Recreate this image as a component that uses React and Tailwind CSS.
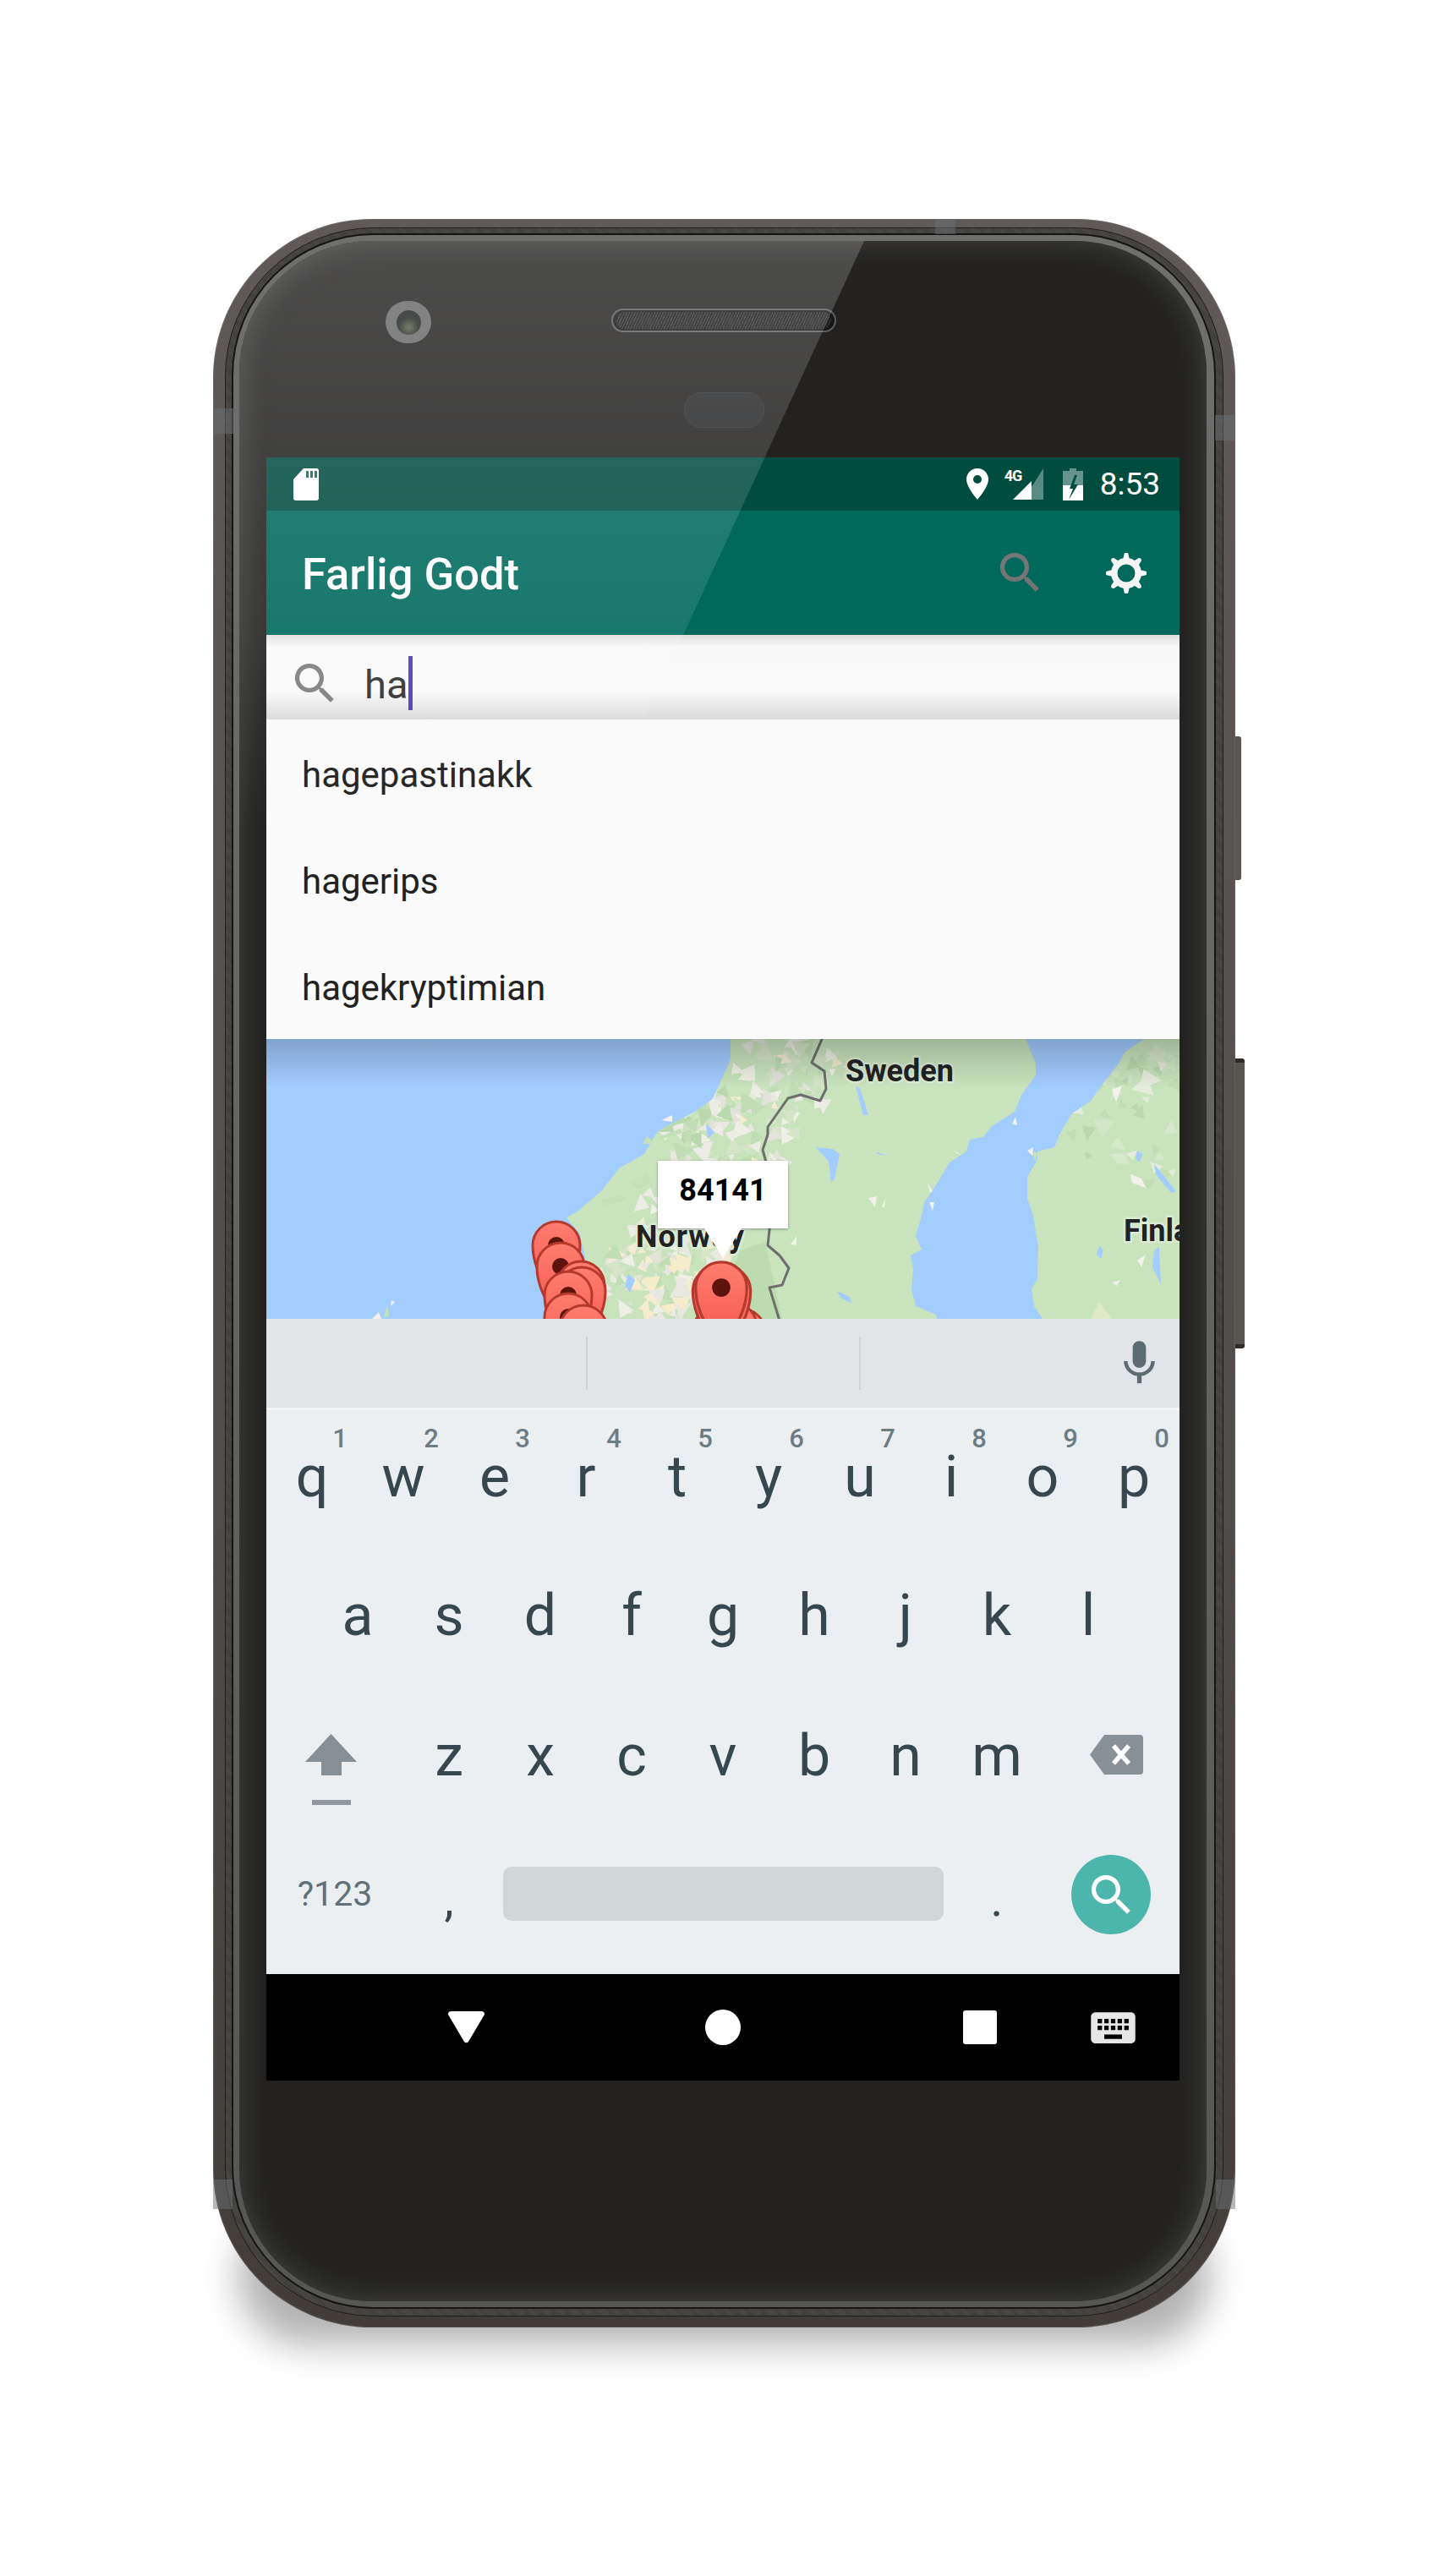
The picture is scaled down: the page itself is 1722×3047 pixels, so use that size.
const SEARCH_PATH = "M15.5 14h-.79l-.28-.27A6.471 6.471 0 0 0 16 9.5 6.5 6.5 0 1 0 9.5 16c1.61 0 3.09-.59 4.23-1.57l.27.28v.79l5 4.99L20.49 19l-4.99-5zm-6 0C7.01 14 5 11.99 5 9.5S7.01 5 9.5 5 14 7.01 14 9.5 11.99 14 9.5 14z";
const MIC_PATH = "M12 14c1.66 0 2.99-1.34 2.99-3L15 5c0-1.66-1.34-3-3-3S9 3.34 9 5v6c0 1.66 1.34 3 3 3zm5.3-3c0 3-2.54 5.1-5.3 5.1S6.7 14 6.7 11H5c0 3.41 2.72 6.23 6 6.72V21h2v-3.28c3.28-.48 6-3.3 6-6.72h-1.7z";
const KEYBOARD_PATH = "M20 5H4c-1.1 0-1.99.9-1.99 2L2 17c0 1.1.9 2 2 2h16c1.1 0 2-.9 2-2V7c0-1.1-.9-2-2-2zm-9 3h2v2h-2V8zm0 3h2v2h-2v-2zM8 8h2v2H8V8zm0 3h2v2H8v-2zm-1 2H5v-2h2v2zm0-3H5V8h2v2zm9 7H8v-2h8v2zm0-4h-2v-2h2v2zm0-3h-2V8h2v2zm3 3h-2v-2h2v2zm0-3h-2V8h2v2z";

const LAND = "549,0 549,24 528,71 507,86 463,109 447,136 417,153 397,179 368,204 355,211 370,229 378,262 392,300 400,331 793,331 792,326 768,316 763,296 765,273 762,256 775,249 768,233 775,209 778,193 788,179 798,163 808,146 828,133 832,119 848,116 858,103 885,86 893,66 910,43 910,29 898,0";
const FINLAND = "1038,0 1015,16 1008,29 985,59 975,73 952,89 938,113 932,128 912,133 912,143 900,163 900,189 907,209 913,246 912,283 905,296 908,316 918,331 1080,331 1080,0";
const BORDER = "658,-2 645,28 660,38 662,59 655,73 632,66 617,70 593,104 593,113 587,131 593,153 595,226 593,244 607,256 618,271 610,291 595,294 607,333";

const LAKES = [
  "650,128 670,130 678,136 672,165 668,170 665,145",
  "675,298 690,305 692,312 680,307",
  "697,56 702,58 712,90 706,90",
  "722,134 735,138 722,136",
  "1030,132 1036,136 1033,145 1028,142",
  "1050,148 1076,180 1070,182 1052,160",
  "1050,250 1056,246 1058,290 1048,270",
  "985,245 990,250 987,260 982,255",
  "750,28 756,40 745,32",
  "520,100 530,110 522,118",
  "428,278 436,285 430,300 424,292",
];

const WHITES = [
  "467,96 480,90 480,98",
  "712,188 722,186 720,199",
  "728,199 732,188 731,199",
  "620,243 627,233 627,244",
  "125,331 133,323 136,331",
  "147,316 148,309 152,311",
  "784,193 790,193 788,203",
  "812,131 822,137 816,135",
  "1000,60 1012,55 1005,75",
  "1030,262 1040,255 1035,270",
  "1000,288 1010,285 1006,292",
  "1022,160 1035,165 1040,176 1024,170",
  "782,170 788,180 785,182",
  "882,100 886,92 888,102",
  "900,132 907,128 906,138",
];

const ISLANDS = [
  "463,116 490,106 492,111 467,118",
  "445,124 450,115 458,121 455,124",
  "139,329 143,314 145,328",
  "430,170 450,158 455,170 440,178",
  "396,190 420,184 425,190 400,198",
  "912,135 904,132 910,145",
];

// seeded so the picture stays the same on every load
const makeRandom = (seed) => () => {
  seed = (seed * 16807) % 2147483647;
  return seed / 2147483647;
};

const scatterPatches = (seed, count, from, to, spread, colors, minSize, maxSize) => {
  const random = makeRandom(seed);
  const length = Math.hypot(to[0] - from[0], to[1] - from[1]);
  const normal = [-(to[1] - from[1]) / length, (to[0] - from[0]) / length];
  const patches = [];
  for (let i = 0; i < count; i++) {
    const along = random();
    const across = (random() - 0.5) * 2 * spread;
    const x = from[0] + (to[0] - from[0]) * along + normal[0] * across;
    const y = from[1] + (to[1] - from[1]) * along + normal[1] * across;
    const size = minSize + random() * (maxSize - minSize);
    const turn = random() * Math.PI * 2;
    const points = [0, 2.1, 4.2].map((step) => {
      const r = size * (0.6 + random() * 0.6);
      return `${(x + Math.cos(turn + step) * r).toFixed(1)},${(y + Math.sin(turn + step) * r).toFixed(1)}`;
    });
    patches.push({ points: points.join(" "), color: colors[Math.floor(random() * colors.length)] });
  }
  return patches;
};

const NORWAY_PATCHES = [
  ...scatterPatches(11, 260, [430, 325], [640, 0], 60, ["#ecebe5", "#e3e2db", "#eef0e6", "#f3ecd2", "#c0ddb3", "#d6e4c8", "#e8e7e0"], 5, 14),
  ...scatterPatches(29, 30, [445, 320], [535, 240], 30, ["#f5ecc9", "#f3ecd2", "#e8e7e0"], 8, 18),
  ...scatterPatches(37, 22, [480, 120], [560, 60], 24, ["#c0ddb3", "#b9d8ad", "#ecebe5"], 8, 16),
];
const FINLAND_PATCHES = [
  ...scatterPatches(53, 40, [950, 110], [1080, 10], 38, ["#c0ddb3", "#d4e6c8", "#e6ecdc", "#b9d8ad"], 6, 15),
  ...scatterPatches(71, 12, [1010, 150], [1080, 130], 30, ["#d7e8cc", "#e6ecdc", "#c0ddb3"], 5, 13),
];

const Icon = ({ path, className }) => (
  <svg viewBox="0 0 24 24" className={className} fill="currentColor">
    <path d={path} />
  </svg>
);

const SdCardIcon = () => (
  <svg viewBox="0 0 30 38" className="h-[38px] w-[30px]">
    <path d="M12 0h15a3 3 0 0 1 3 3v32a3 3 0 0 1-3 3H3a3 3 0 0 1-3-3V13z" fill="#fff" />
    <path d="M15 3h3v8h-3zM20 3h3v8h-3zM25 3h3v8h-3z" fill="#27625a" />
  </svg>
);

const SignalIcon = () => (
  <div className="relative h-[37px] w-[46px]">
    <span className="absolute left-0 top-[-2px] text-[18px] font-bold leading-[22px] tracking-[-1px] text-white">4G</span>
    <svg viewBox="0 0 46 37" className="h-[37px] w-[46px]">
      <path d="M32 37V22L46 0v37z" fill="#fff" opacity="0.35" />
      <path d="M10 37l22-22v22z" fill="#fff" />
    </svg>
  </div>
);

const BatteryIcon = () => (
  <svg viewBox="0 0 24 38" className="h-[38px] w-[24px]">
    <path d="M8 0h8v3h8v17H0V3h8z" fill="#fff" opacity="0.4" />
    <path d="M0 20h24v18H0z" fill="#fff" />
    <path d="M14 8l-6 16h4l-5 13 11-18h-5l4-11z" fill="#004d40" />
  </svg>
);

const GearIcon = () => (
  <svg viewBox="0 0 48 48" className="h-[48px] w-[48px]">
    <circle cx="24" cy="24" r="14.2" fill="none" stroke="#f5f5f5" strokeWidth="7.4" />
    {[0, 45, 90, 135, 180, 225, 270, 315].map((angle) => (
      <path key={angle} d="M19.5 11L21.5 1.5a2.6 2.6 0 0 1 5 0L28.5 11z" fill="#f5f5f5" transform={`rotate(${angle} 24 24)`} />
    ))}
  </svg>
);

const Pin = ({ x, y, size = 1 }) => (
  <g transform={`translate(${x} ${y}) scale(${size})`}>
    <path d="M0 78C-5 52-28 34-28 0A28 28 0 1 1 28 0C28 34 5 52 0 78Z" fill="url(#pinFill)" stroke="#b5392c" strokeWidth="3" />
    <circle cx="0" cy="0" r="10" fill="#5e130d" />
  </g>
);

const MapView = () => (
  <div className="relative h-[331px] w-full bg-[#a3ccff]">
    <svg viewBox="0 0 1080 331" className="block h-[331px] w-[1080px]">
      <defs>
        <linearGradient id="pinFill" x1="0" y1="0" x2="0" y2="1">
          <stop offset="0" stopColor="#ff7d70" />
          <stop offset="1" stopColor="#f2504a" />
        </linearGradient>
        <clipPath id="landClip">
          <polygon points={LAND} />
          <polygon points={FINLAND} />
        </clipPath>
      </defs>
      <polygon points={LAND} fill="#c9e3bd" />
      <polygon points={FINLAND} fill="#c9e3bd" />
      <g clipPath="url(#landClip)">
        <polygon points="530,331 560,250 590,240 610,331" fill="#bcdcb0" />
        {NORWAY_PATCHES.map((patch, i) => (
          <polygon key={i} points={patch.points} fill={patch.color} />
        ))}
        {FINLAND_PATCHES.map((patch, i) => (
          <polygon key={i} points={patch.points} fill={patch.color} />
        ))}
        <polygon points="975,331 985,310 1000,331" fill="#dfe9c6" />
        {LAKES.map((points) => (
          <polygon key={points} points={points} fill="#a3ccff" />
        ))}
      </g>
      {ISLANDS.map((points) => (
        <polygon key={points} points={points} fill="#c3e0b6" />
      ))}
      {WHITES.map((points) => (
        <polygon key={points} points={points} fill="#f3f1ec" />
      ))}
      <polyline points={BORDER} fill="none" stroke="#6e6e6e" strokeWidth="3" strokeLinejoin="round" />
      <g fontFamily="Roboto, sans-serif" fontWeight="700" fontSize="36" fill="#222" stroke="#dcebd4" strokeWidth="5" paintOrder="stroke" strokeLinejoin="round">
        <text x="685" y="50">Sweden</text>
        <text x="437" y="246" letterSpacing="1">Norway</text>
        <text x="1014" y="239">Finland</text>
      </g>
      <Pin x={343} y={244} />
      <Pin x={348} y={269} />
      <Pin x={372} y={291} />
      <Pin x={373} y={298} />
      <Pin x={357} y={303} />
      <Pin x={357} y={329} />
      <Pin x={375} y={343} />
      <Pin x={562} y={347} />
      <Pin x={520} y={358} />
      <Pin x={552} y={340} />
      <Pin x={532} y={346} />
      <Pin x={543} y={298} size={1.06} />
      <Pin x={534} y={298} size={1.06} />
      <Pin x={538} y={294} size={1.08} />
    </svg>
    <div className="absolute left-0 right-0 top-0 h-[58px] bg-gradient-to-b from-black/20 to-transparent" />
    <div className="absolute left-[463px] top-[144px] flex h-[80px] w-[154px] justify-center bg-white pt-[14px] shadow-[0_1px_3px_rgba(0,0,0,0.35)]">
      <span className="text-[36px] font-bold leading-[42px] text-black">84141</span>
    </div>
    <div className="absolute left-[518px] top-[224px] h-[35px] w-[44px] bg-white [clip-path:polygon(0_0,100%_0,50%_100%)]" />
  </div>
);

const Key = ({ letter, digit }) => (
  <div className="relative flex w-[108px] justify-center">
    {digit ? (
      <span className="absolute left-[87px] top-[-27px] -translate-x-1/2 text-[31px] font-medium leading-[31px] text-[#6e7c84]">{digit}</span>
    ) : null}
    <span className="text-[68px] leading-[68px] text-[#37474f]">{letter}</span>
  </div>
);

const Keyboard = () => (
  <div className="border-t-[3px] border-[#f2f4f5] bg-[#eceff1]">
    <div className="flex h-[167px] pt-[45px]">
      {["q", "w", "e", "r", "t", "y", "u", "i", "o", "p"].map((letter, i) => (
        <Key key={letter} letter={letter} digit={String((i + 1) % 10)} />
      ))}
    </div>
    <div className="flex h-[167px] px-[54px] pt-[42px]">
      {["a", "s", "d", "f", "g", "h", "j", "k", "l"].map((letter) => (
        <Key key={letter} letter={letter} />
      ))}
    </div>
    <div className="flex h-[167px] pt-[41px]">
      <div className="flex w-[162px] flex-col items-center pr-[9px] pt-[8px]">
        <svg viewBox="0 0 61 49" className="h-[49px] w-[61px]">
          <path d="M30.5 0L61 33H43V49H19V33H0z" fill="#858f95" />
        </svg>
        <div className="mt-[29px] h-[6px] w-[46px] bg-[#8f999f]" />
      </div>
      {["z", "x", "c", "v", "b", "n", "m"].map((letter) => (
        <Key key={letter} letter={letter} />
      ))}
      <div className="flex w-[162px] justify-center pl-[12px] pt-[9px]">
        <svg viewBox="0 0 63 47" className="h-[47px] w-[63px]">
          <path d="M17 0H59a4 4 0 0 1 4 4V43a4 4 0 0 1-4 4H17L0 23.5z" fill="#879196" />
          <path d="M28 13l18 21M46 13L28 34" stroke="#fff" strokeWidth="5.5" fill="none" />
        </svg>
      </div>
    </div>
    <div className="flex h-[166px]">
      <div className="w-[162px] pt-[51px] text-center text-[41px] leading-[41px] text-[#60707a]">?123</div>
      <div className="w-[108px] pt-[50px] text-center text-[56px] leading-[56px] text-[#37474f]">,</div>
      <div className="flex w-[540px] justify-center pt-[39px]">
        <div className="h-[64px] w-[521px] rounded-[10px] bg-[#d0d5d8]" />
      </div>
      <div className="w-[108px] pt-[50px] text-center text-[56px] leading-[56px] text-[#37474f]">.</div>
      <div className="flex w-[162px] justify-center pt-[25px]">
        <div className="flex h-[94px] w-[94px] items-center justify-center rounded-full bg-[#4db6ac] text-white">
          <Icon path={SEARCH_PATH} className="h-[63px] w-[63px]" />
        </div>
      </div>
    </div>
  </div>
);

const NavBar = () => (
  <div className="flex h-[126px] items-center bg-black pl-[215px]">
    <svg viewBox="0 0 43 38" className="h-[38px] w-[43px]">
      <path d="M3 0H40a3 3 0 0 1 2.6 4.4L24 36a3 3 0 0 1-5 0L.4 4.4A3 3 0 0 1 3 0z" fill="#fff" />
    </svg>
    <div className="ml-[261px] h-[42px] w-[42px] rounded-full bg-white" />
    <div className="ml-[263px] h-[40px] w-[40px] rounded-[3px] bg-white" />
    <Icon path={KEYBOARD_PATH} className="ml-[106px] h-[63px] w-[63px] text-[#e6e6e6]" />
  </div>
);

const Screen = () => (
  <div className="relative flex h-[1920px] w-[1080px] flex-col overflow-hidden font-['Roboto',sans-serif]">
    <div className="flex h-[63px] items-center bg-[#004d40] pl-[32px] pr-[23px] text-white">
      <SdCardIcon />
      <div className="ml-auto flex items-center">
        <svg viewBox="0 0 26 37" className="h-[37px] w-[26px]">
          <path d="M13 0C5.8 0 0 5.8 0 13c0 9.5 13 24 13 24s13-14.500 13-24C26 5.800 20.200 0 13 0zm0 18a5 5 0 1 1 0-10 5 5 0 0 1 0 10z" fill="#fff" />
        </svg>
        <div className="ml-[19px]">
          <SignalIcon />
        </div>
        <div className="ml-[23px]">
          <BatteryIcon />
        </div>
        <span className="ml-[20px] text-[37px] leading-[42px]">8:53</span>
      </div>
    </div>

    <div className="flex h-[147px] items-center bg-[#00695c] pl-[42px] pr-[39px]">
      <h1 className="pt-[3px] text-[52.5px] font-medium leading-[60px] text-white">Farlig Godt</h1>
      <Icon path={SEARCH_PATH} className="ml-auto h-[63px] w-[63px] text-[#757575]" />
      <div className="ml-[70px]">
        <GearIcon />
      </div>
    </div>

    <div className="flex h-[100px] items-center bg-[linear-gradient(#dedede_0px,#f8f8f8_14px,#fafafa_65%,#dadada_100%)] pl-[26px] pt-[14px]">
      <Icon path={SEARCH_PATH} className="h-[63px] w-[63px] text-[#7f7f7f]" />
      <span className="ml-[27px] pt-[3px] text-[47px] leading-[56px] text-[#333]">ha</span>
      <span className="ml-[1px] h-[64px] w-[5px] bg-[#5040b0]" />
    </div>

    <ul className="h-[378px] bg-[#fafafa]">
      {["hagepastinakk", "hagerips", "hagekryptimian"].map((item) => (
        <li key={item} className="flex h-[126px] items-center pl-[42px] pt-[5px] text-[42px] leading-[50px] text-[#222]">
          {item}
        </li>
      ))}
    </ul>

    <MapView />

    <div className="relative flex h-[105px] items-center bg-[#e1e5e8]">
      <div className="ml-[378px] h-[63px] w-[2px] bg-[#cfd3d6]" />
      <div className="ml-[321px] h-[63px] w-[2px] bg-[#cfd3d6]" />
      <Icon path={MIC_PATH} className="ml-[298px] h-[63px] w-[63px] text-[#5f6b73]" />
    </div>

    <Keyboard />
    <NavBar />
  </div>
);

const Glare = () => (
  <svg className="pointer-events-none absolute left-0 top-0 h-[1000px] w-[800px]" viewBox="0 0 800 1000">
    <defs>
      <linearGradient id="glareFill" x1="0" y1="0" x2="0" y2="1">
        <stop offset="0" stopColor="#fff" stopOpacity="0.19" />
        <stop offset="0.26" stopColor="#fff" stopOpacity="0.14" />
        <stop offset="0.46" stopColor="#fff" stopOpacity="0.1" />
        <stop offset="0.57" stopColor="#fff" stopOpacity="0.05" />
        <stop offset="0.7" stopColor="#fff" stopOpacity="0" />
      </linearGradient>
    </defs>
    <polygon points="0,0 739,0 280,1000 0,1000" fill="url(#glareFill)" />
  </svg>
);

const Phone = () => (
  <div className="relative w-[1209px]">
    <div className="absolute bottom-[-20px] left-[30px] right-[30px] h-[160px] rounded-[140px] bg-black/30 blur-[22px]" />
    {/* side buttons */}
    <div className="absolute left-[1205px] top-[612px] h-[170px] w-[11px] rounded-r-[3px] bg-[#5b5653]" />
    <div className="absolute left-[1205px] top-[993px] h-[343px] w-[15px] rounded-r-[3px] border-y-[5px] border-[#2e2c2a] bg-[#57544f]" />

    <div className="relative rounded-[188px] bg-[linear-gradient(#5f5a57,#504c49_60%,#423d39)] pb-[13px] pl-[14px] pr-[14px] pt-[10px] shadow-[inset_0_0_2px_#8a8582]">
      <div className="rounded-[176px] border border-[#211f1e] bg-[repeating-linear-gradient(45deg,#4c4a46_0,#4c4a46_1px,#3f3d3a_1px,#3f3d3a_2px)] pb-[8px] pl-[7px] pr-[8px] pt-[6px]">
        <div className="rounded-[168px] bg-[#151413] p-[2px]">
          <div className="rounded-[166px] bg-[linear-gradient(#6f6f6d,#565654)] pb-[7px] pl-[7px] pr-[9px] pt-[7px]">
            <div className="relative overflow-hidden rounded-[156px] bg-[#232221] pb-[261px] pl-[32px] pr-[30px] shadow-[inset_0_0_28px_6px_#3d3d3b]">
              <div className="relative flex h-[256px] flex-col items-center pt-[80px]">
                <div className="absolute left-[141px] top-[71px] flex h-[50px] w-[54px] items-center justify-center rounded-full bg-[#696969]">
                  <div className="h-[29px] w-[29px] rounded-full bg-[radial-gradient(circle_at_50%_70%,#5c6449_0,#242825_45%,#1e2120_100%)]" />
                </div>
                <div className="flex h-[28px] w-[266px] items-center rounded-full border-2 border-[#5d5d5d] bg-[#171717] px-[4px]">
                  <div className="h-[20px] w-full rounded-full bg-[repeating-linear-gradient(115deg,#1c1c1c_0,#1c1c1c_2px,#3a3a3a_2px,#3a3a3a_3px)]" />
                </div>
                <div className="mt-[71px] h-[42px] w-[95px] rounded-[20px] border border-[#333] bg-[#28292a]" />
              </div>
              <Screen />
              <Glare />
            </div>
          </div>
        </div>
      </div>
    </div>

    {/* antenna bands on the metal frame */}
    <div className="absolute left-[1px] top-[224px] h-[30px] w-[23px] bg-[#6b6f74]/50" />
    <div className="absolute right-[1px] top-[232px] h-[30px] w-[23px] bg-[#6b6f74]/50" />
    <div className="absolute bottom-[140px] left-[0px] h-[35px] w-[23px] bg-[#6b6f74]/50" />
    <div className="absolute bottom-[140px] right-[0px] h-[35px] w-[23px] bg-[#6b6f74]/50" />
    <div className="absolute left-[854px] top-0 h-[18px] w-[24px] bg-[#6b6f74]/50" />
  </div>
);

const App = () => (
  <div className="h-[3047px] w-full overflow-hidden bg-white pl-[252px] pt-[259px]">
    <Phone />
  </div>
);

export default App;
